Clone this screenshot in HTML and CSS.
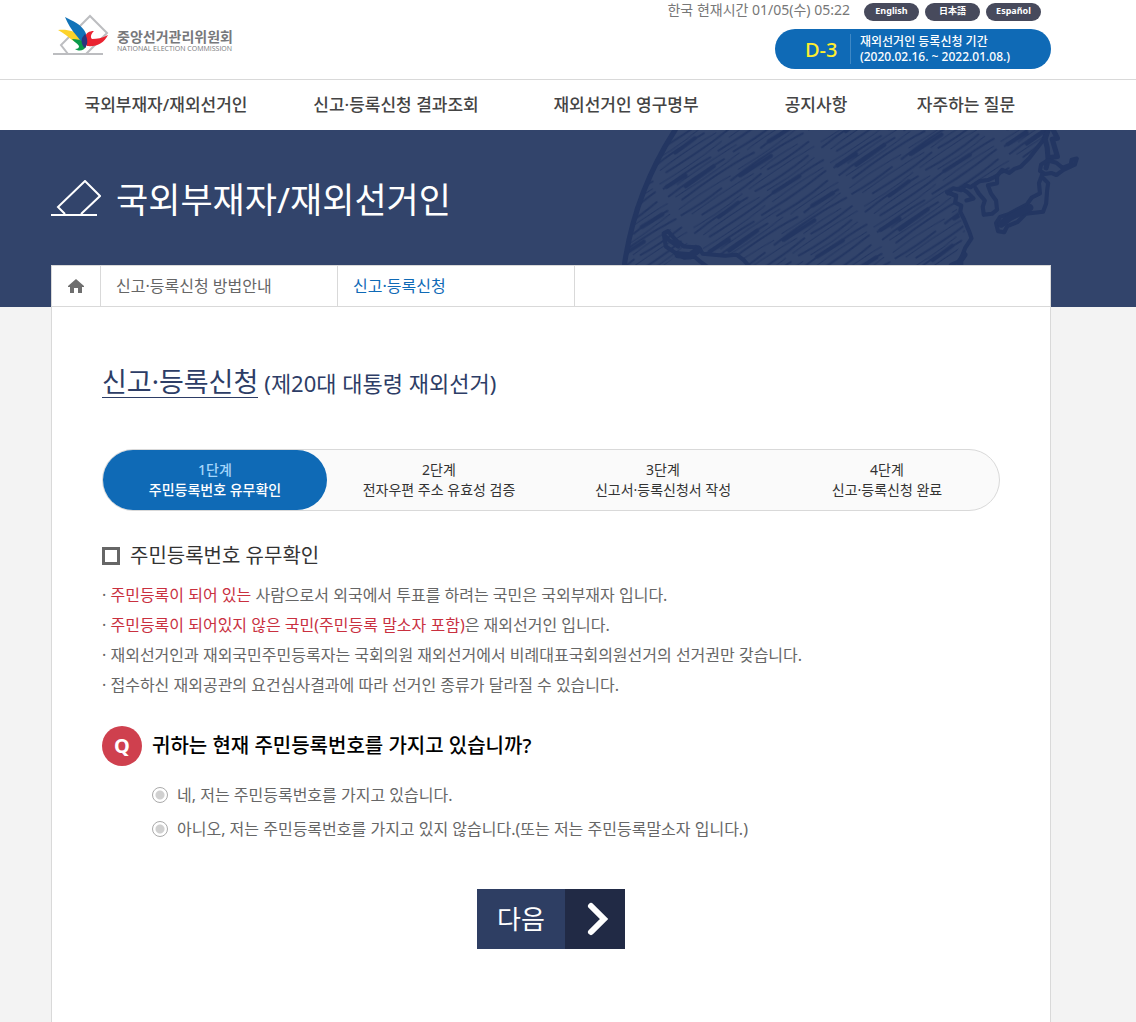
FILE: index.html
```
<!DOCTYPE html>
<html lang="ko">
<head>
    <meta charset="UTF-8">
    <meta name="viewport" content="width=device-width, initial-scale=1.0">
    <title>신고·등록신청 - 중앙선거관리위원회</title>
    <link rel="stylesheet" href="styles.css">
</head>
<body>
    <header class="header">
        <div class="top band">
            <div class="inner top-inner">
                <a href="#" class="logo">
                    <svg width="58" height="42" viewBox="0 0 58 42" aria-hidden="true">
                        <path d="M16 40L9 31 38 2l17 17-21 21" fill="none" stroke="#bcbdc0" stroke-width="2"/>
                        <path d="M1 40h50" stroke="#bcbdc0" stroke-width="2"/>
                        <path d="M6 16c9-1 17 1 22 6 3 3 4 6 3 9-4-1-7-3-11-5-4-3-8-7-14-10z" fill="#fdd32b"/>
                        <path d="M13 3c8 4 15 7 19 13 4 6 4 12 0 17-2-5-5-8-8-12C19 15 16 10 13 3z" fill="#1173b9"/>
                        <path d="M20 25c5 0 9 1 12 3l2 5c-2 3-6 5-11 2 3 0 4-1 4-3-2-3-5-4-7-7z" fill="#0a9a4a"/>
                        <path d="M42 17c-5 0-8 2-9 6-1 4 0 7 2 9 10 1 17-3 21-11-6 3-11 4-16 4-2-2-1-5 2-8z" fill="#ea2331"/>
                        <path d="M33 20c3 5 3 10 0 14-3-2-4-6-3-10z" fill="#29357d"/>
                    </svg>
                    <span class="logo-text">
                        <strong>중앙선거관리위원회</strong>
                        <small>NATIONAL ELECTION COMMISSION</small>
                    </span>
                </a>
                <div class="util">
                    <div class="util-row">
                        <span class="clock">한국 현재시간 01/05(수) 05:22</span>
                        <a href="#" class="lang">English</a>
                        <a href="#" class="lang" lang="ja">日本語</a>
                        <a href="#" class="lang">Español</a>
                    </div>
                    <div class="dday">
                        <strong>D-3</strong>
                        <p>재외선거인 등록신청 기간<br>(2020.02.16. ~ 2022.01.08.)</p>
                    </div>
                </div>
            </div>
        </div>
        <nav class="band">
            <div class="inner gnb">
                <a href="#">국외부재자/재외선거인</a>
                <a href="#">신고·등록신청 결과조회</a>
                <a href="#">재외선거인 영구명부</a>
                <a href="#">공지사항</a>
                <a href="#">자주하는 질문</a>
            </div>
        </nav>
    </header>

    <div class="hero band">
        <div class="inner hero-inner">
            <svg class="globe" width="469" height="138" viewBox="0 0 457 135" aria-hidden="true">
                <defs>
                    <!-- pencil hatching -->
                    <pattern id="hatch" width="150" height="76" patternUnits="userSpaceOnUse" patternTransform="rotate(-34)">
                        <g fill="none" stroke="#233662" stroke-linecap="round">
                            <path stroke-width="2" d="M0 3q30-2 66 0M78 2q30 2 60-1M10 13q50-3 84 1M102 14q20-2 40 0M0 25q25 2 48 0M60 24q40-3 84 1M18 36q40 2 70-1M96 35q20 2 48 0M2 47q30-3 62 0M74 46q30 3 62 0M12 58q34 2 80-1M104 58q20-2 42 0M0 70q24-2 56 0M66 69q34 2 76-1"/>
                            <path stroke-width="1" d="M6 7q40 2 76-1M90 8q20-2 56 0M2 19q30-2 60 1M72 19q30 2 70-1M10 30q40-2 72 1M90 31q20-2 44 0M4 42q30 2 58-1M70 41q40-2 76 1M8 53q30-2 66 0M84 52q30 2 56-1M0 64q40 2 74-1M82 64q30-2 60 0M14 74q34-2 70 0"/>
                            <path stroke-width="4" d="M20 4l34-1M70 25l36 1M30 47l24-1M88 57l30 1M4 70l22 1M112 13l24 1"/>
                        </g>
                    </pattern>
                </defs>
                <path fill="url(#hatch)" d="M51 0L28 45 11 78 1 135h36l24-18 14-2 4 6 32 1 15 13h179l20-13 11-20-10-27-8-15 18-5 30-10 17-7 28-28 4-10z"/>
                <g fill="none" stroke="#233662" stroke-width="4" stroke-linejoin="round" stroke-linecap="round">
                    <path stroke-width="5" d="M51 0Q11 62 1 135"/>
                    <path d="M415 0l-4 10-13 17-9 9-6 2-5 4-7-3-5 6-9 4-8 1-9 6-5-2-4 5-8-2-5 4 8 4-1 6 6 3-1 6 4 8 5 12 2 6-6 9-5 13-9 4-5 7-7 3"/>
                    <path d="M331 57l6 4 6 6-7 2M317 61l9 3M366 45v7l-9 2 3 8 5 7 1 9-5 4-8 1-1-8 2-6-6-7-3-5"/>
                    <path stroke-width="5" d="M416 0l-3 9 2 8 1 12-2 8M421 0l4 8-5 1 5 17-7 1"/>
                    <path d="M417 30l7 2 6 5 8-3 1-5 5-1-2 6-11 5-7 5-5-2-6 1-5-3 1-6 6-4"/>
                    <path d="M410 44l-3 8 1 10-8 4-5 7-8 4-9 5-9 3-4 6 2 8 6 1 3-6 10-4 8-8 17-2 3-8 1-13 1-7-5-5"/>
                    <path stroke-width="7" d="M370 92l8-6 10-5 10-5"/>
                    <path d="M54 114l-10-7-4-5 2 12 9 6 9 5 10-1 6 5 8 6M40 101l4-2 8 9 8 6 14 1 4 6 22 2 11-1 7 5 6 7"/>
                    <path stroke-width="7" d="M54 122l12 1 8-6"/>
                    <path stroke-width="6" d="M334 122l-4 6v5"/>
                </g>
            </svg>
            <svg class="ballot" width="50" height="36" viewBox="0 0 50 36" aria-hidden="true">
                <path d="M14 34L7 27 34 1l15 15-19 18M0 35h46" fill="none" stroke="#fff" stroke-width="2"/>
            </svg>
            <h1>국외부재자/재외선거인</h1>
        </div>
    </div>

    <div class="content band">
        <main class="inner panel">
            <nav class="crumbs">
                <a href="#" class="home" aria-label="홈">
                    <svg width="16" height="14" viewBox="0 0 16 14" aria-hidden="true">
                        <path d="M8 0l8 7v1h-2v6H10V9H6v5H2V8H0V7z" fill="#6e6e6e"/>
                    </svg>
                </a>
                <a href="#">신고·등록신청 방법안내</a>
                <a href="#" class="on">신고·등록신청</a>
            </nav>

            <div class="body">
                <h2><span>신고·등록신청</span> <small>(제20대 대통령 재외선거)</small></h2>

                <ol class="steps">
                    <li class="on"><em>1단계</em><span>주민등록번호 유무확인</span></li>
                    <li><em>2단계</em><span>전자우편 주소 유효성 검증</span></li>
                    <li><em>3단계</em><span>신고서·등록신청서 작성</span></li>
                    <li><em>4단계</em><span>신고·등록신청 완료</span></li>
                </ol>

                <h3>주민등록번호 유무확인</h3>
                <ul class="notes">
                    <li>· <b>주민등록이 되어 있는</b> 사람으로서 외국에서 투표를 하려는 국민은 국외부재자 입니다.</li>
                    <li>· <b>주민등록이 되어있지 않은 국민(주민등록 말소자 포함)</b>은 재외선거인 입니다.</li>
                    <li>· 재외선거인과 재외국민주민등록자는 국회의원 재외선거에서 비례대표국회의원선거의 선거권만 갖습니다.</li>
                    <li>· 접수하신 재외공관의 요건심사결과에 따라 선거인 종류가 달라질 수 있습니다.</li>
                </ul>

                <form>
                    <fieldset>
                        <legend><i>Q</i>귀하는 현재 주민등록번호를 가지고 있습니까?</legend>
                        <div class="options">
                            <label><input type="radio" name="regno" value="y">네, 저는 주민등록번호를 가지고 있습니다.</label>
                            <label><input type="radio" name="regno" value="n">아니오, 저는 주민등록번호를 가지고 있지 않습니다.(또는 저는 주민등록말소자 입니다.)</label>
                        </div>
                    </fieldset>
                    <button type="button" class="next">
                        <span>다음</span>
                        <svg width="60" height="60" viewBox="0 0 60 60" aria-hidden="true">
                            <path d="M26 17l13 13-13 13" fill="none" stroke="#fff" stroke-width="6" stroke-linecap="round"/>
                        </svg>
                    </button>
                </form>
            </div>
        </main>
    </div>
</body>
</html>
```

FILE: styles.css
```
*,
*::before {
    margin: 0;
    padding: 0;
    box-sizing: border-box;
}

body {
    min-height: 100vh;
    display: flex;
    flex-direction: column;
    background: #f3f3f3;
    color: #666;
    font-family: "Noto Sans", "Noto Sans CJK KR", sans-serif;
    font-size: 16px;
}

a {
    color: inherit;
    text-decoration: none;
}

svg {
    display: block;
    flex-shrink: 0;
}

ol, ul {
    list-style: none;
}

/* full-width strip with a centred column */
.band {
    padding-right: 34px;
}

.inner {
    max-width: 1000px;
    margin: 0 auto;
}

/* header */
.header {
    background: #fff;
}

.top {
    border-bottom: 1px solid #d9d9d9;
}

.top-inner {
    display: flex;
    justify-content: space-between;
    height: 79px;
}

.logo {
    display: flex;
    align-items: flex-start;
    gap: 7px;
    padding: 14px 0 0 1px;
}

.logo-text {
    display: flex;
    flex-direction: column;
    padding-top: 14px;
    color: #77787b;
}

.logo-text strong {
    font-size: 14px;
    line-height: 17px;
}

.logo-text small {
    font-size: 7px;
    line-height: 8px;
    font-family: "Open Sans", sans-serif;
}

.util-row {
    display: flex;
    justify-content: flex-end;
    gap: 6px;
    padding: 3px 10px 0 0;
}

.clock {
    margin-right: 8px;
    color: #777;
    font-size: 14px;
    line-height: 14px;
}

.lang {
    width: 55px;
    height: 18px;
    border-radius: 9px;
    background: #474a5c;
    color: #fff;
    font-family: "Noto Sans", "Noto Sans CJK JP", sans-serif;
    font-size: 9px;
    font-weight: 700;
    line-height: 16px;
    text-align: center;
}

.dday {
    display: flex;
    align-items: center;
    width: 276px;
    height: 40px;
    margin: 8px 0 0 auto;
    padding-left: 30px;
    border-radius: 20px;
    background: #0f6ab6;
    color: #fff;
}

.dday strong {
    width: 45px;
    color: #ffee2e;
    font-size: 20px;
    font-weight: 500;
}

.dday p {
    padding-left: 9px;
    border-left: 1px solid #3f88c5;
    font-size: 12px;
    font-weight: 500;
    line-height: 15px;
}

.gnb {
    display: grid;
    grid-template-columns: 23fr 23fr 23fr 15fr 15fr 1fr;
    height: 50px;
    color: #444;
    font-size: 17px;
    font-weight: 500;
    line-height: 50px;
    text-align: center;
}

/* hero */
.hero {
    background: #32446b;
    overflow: hidden;
}

.hero-inner {
    position: relative;
    display: flex;
    gap: 15px;
    height: 177px;
    padding-top: 50px;
    color: #fff;
}

.hero h1 {
    position: relative;
    font-size: 35px;
    font-weight: 400;
    line-height: 40px;
}

.globe {
    position: absolute;
    top: 0;
    right: -40px;
}

/* content */
.content {
    display: flex;
    flex: 1;
    margin-top: -42px;
}

.panel {
    position: relative;
    flex: 1;
    border: 1px solid #d9d9d9;
    border-bottom: 0;
    background: #fff;
}

.crumbs {
    display: flex;
    height: 41px;
    border-bottom: 1px solid #d9d9d9;
    line-height: 40px;
}

.crumbs a {
    width: 237px;
    padding-left: 15px;
    border-right: 1px solid #d9d9d9;
}

.crumbs .home {
    display: flex;
    align-items: center;
    justify-content: center;
    width: 49px;
    padding: 0;
}

.crumbs .on {
    color: #0f6ab6;
}

.body {
    padding: 56px 50px 72px;
}

h2 {
    display: flex;
    align-items: baseline;
    gap: 6px;
    height: 40px;
    padding-top: 4px;
    color: #2d3d66;
    font-weight: 400;
}

h2 span {
    border-bottom: 1px solid #2d3d66;
    font-size: 27px;
    line-height: 30px;
}

h2 small {
    font-size: 22px;
    line-height: 30px;
}

.steps {
    display: grid;
    grid-template-columns: repeat(4, 1fr);
    margin-top: 46px;
    border: 1px solid #d9d9d9;
    border-radius: 31px;
    background: #fafafa;
    color: #333;
    font-size: 14px;
    line-height: 20px;
    text-align: center;
}

.steps li {
    padding: 10px 0;
    border-radius: 30px;
}

.steps em,
.steps span {
    display: block;
    font-style: normal;
}

.steps .on {
    background: #0f6ab6;
    color: #fff;
    font-weight: 500;
}

.steps .on em {
    color: #a5d6fb;
}

h3 {
    display: flex;
    align-items: center;
    gap: 10px;
    margin-top: 25px;
    color: #333;
    font-size: 20px;
    font-weight: 400;
    line-height: 40px;
}

h3::before {
    content: '';
    width: 18px;
    height: 18px;
    border: 3px solid #666;
}

.notes {
    margin-top: 4px;
    line-height: 30px;
}

.notes b {
    color: #c9303f;
    font-weight: 400;
}

fieldset {
    margin-top: 26px;
    border: 0;
}

legend {
    display: flex;
    align-items: center;
    gap: 10px;
    color: #000;
    font-size: 20px;
    font-weight: 500;
    line-height: 40px;
}

legend i {
    width: 40px;
    height: 40px;
    border-radius: 50%;
    background: #cf404e;
    color: #fff;
    font-style: normal;
    font-weight: 700;
    text-align: center;
}

.options {
    padding: 12px 0 0 50px;
}

.options label {
    display: flex;
    align-items: center;
    gap: 9px;
    line-height: 34px;
}

.options input {
    appearance: none;
    width: 16px;
    height: 16px;
    border: 1px solid #aaa;
    border-radius: 50%;
    background: radial-gradient(circle, #d0d0d0 4px, #fff 5px);
}

.options input:checked {
    background: radial-gradient(circle, #0f6ab6 4px, #fff 5px);
}

.next {
    display: flex;
    margin: 43px auto 0;
    border: 0;
    background: #2e3e63;
    color: #fff;
    font-family: inherit;
    font-size: 26px;
    line-height: 60px;
    cursor: pointer;
}

.next span {
    width: 88px;
}

.next svg {
    background: #212a45;
}
```
